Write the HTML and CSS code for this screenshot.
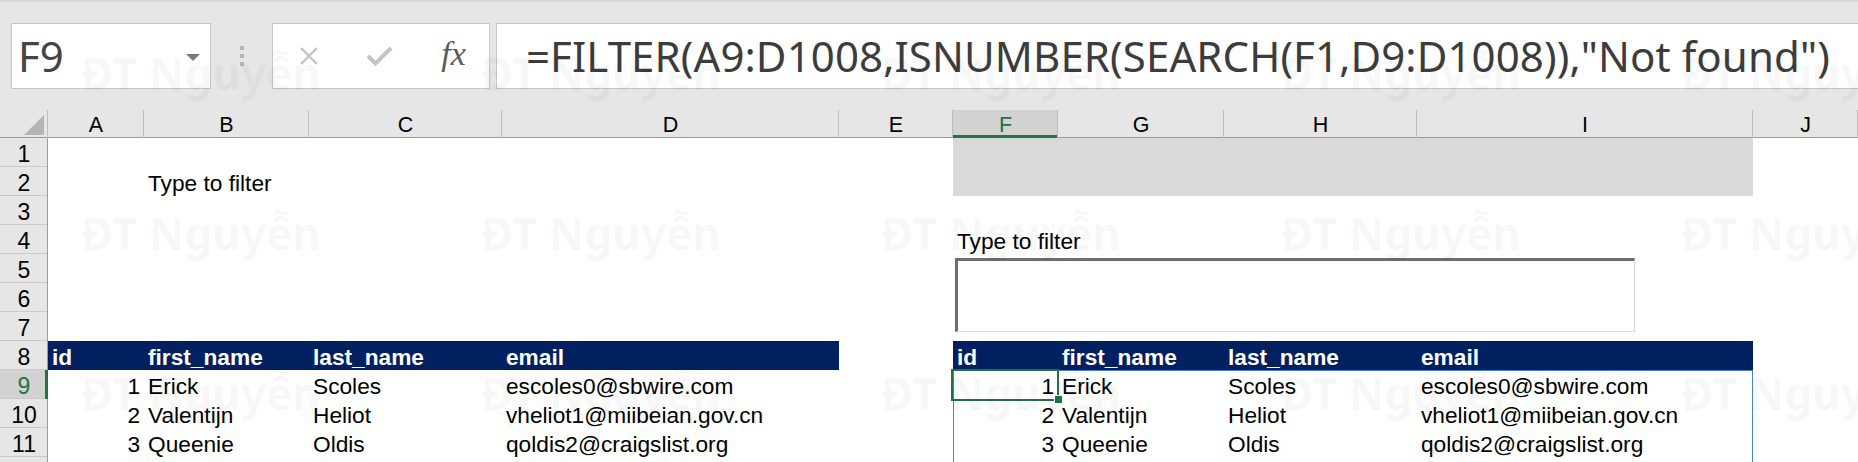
FILE: index.html
```html
<!DOCTYPE html>
<html lang="en">
<head>
    <meta charset="UTF-8">
    <meta name="viewport" content="width=device-width, initial-scale=1.0">
    <title>FILTER - Type to filter</title>
    <link rel="stylesheet" href="styles.css">
</head>
<body>
    <div class="formula-bar">
        <div class="name-box">
            <span>F9</span>
            <span class="drop"></span>
        </div>
        <div class="grip"><i></i><i></i><i></i></div>
        <div class="func-box">
            <span class="slot">
                <svg width="20" height="20" viewBox="0 0 20 20"><path d="M2 2 L18 18 M18 2 L2 18" stroke="#c3c3c3" stroke-width="2.4" fill="none"/></svg>
            </span>
            <span class="slot">
                <svg width="27" height="20" viewBox="0 0 27 20"><path d="M2 10 L9.5 17.5 L25 2" stroke="#c3c3c3" stroke-width="4" fill="none"/></svg>
            </span>
            <span class="slot fx">fx</span>
        </div>
        <div class="formula">=FILTER(A9:D1008,ISNUMBER(SEARCH(F1,D9:D1008)),"Not found")</div>
    </div>

    <table class="grid">
        <colgroup>
            <col style="width:48px"><col style="width:96px"><col style="width:165px"><col style="width:193px">
            <col style="width:337px"><col style="width:114px"><col style="width:105px"><col style="width:166px">
            <col style="width:193px"><col style="width:336px"><col style="width:105px">
        </colgroup>
        <tr class="col-heads">
            <th class="corner"><span class="tri"></span></th>
            <th>A</th><th>B</th><th>C</th><th>D</th><th>E</th>
            <th class="sel">F</th><th>G</th><th>H</th><th>I</th><th>J</th>
        </tr>
        <tr>
            <th class="rh">1</th>
            <td></td><td></td><td></td><td></td><td></td>
            <td class="fill"></td><td class="fill"></td><td class="fill"></td><td class="fill"></td><td></td>
        </tr>
        <tr>
            <th class="rh">2</th>
            <td></td><td>Type to filter</td><td></td><td></td><td></td>
            <td class="fill"></td><td class="fill"></td><td class="fill"></td><td class="fill"></td><td></td>
        </tr>
        <tr>
            <th class="rh">3</th>
            <td></td><td></td><td></td><td></td><td></td><td></td><td></td><td></td><td></td><td></td>
        </tr>
        <tr>
            <th class="rh">4</th>
            <td></td><td></td><td></td><td></td><td></td>
            <td>Type to filter</td><td></td><td></td><td></td><td></td>
        </tr>
        <tr>
            <th class="rh">5</th>
            <td></td><td></td><td></td><td></td><td></td><td></td><td></td><td></td><td></td><td></td>
        </tr>
        <tr>
            <th class="rh">6</th>
            <td></td><td></td><td></td><td></td><td></td><td></td><td></td><td></td><td></td><td></td>
        </tr>
        <tr>
            <th class="rh">7</th>
            <td></td><td></td><td></td><td></td><td></td><td></td><td></td><td></td><td></td><td></td>
        </tr>
        <tr>
            <th class="rh">8</th>
            <td class="hd">id</td><td class="hd">first_name</td><td class="hd">last_name</td><td class="hd">email</td>
            <td></td>
            <td class="hd">id</td><td class="hd">first_name</td><td class="hd">last_name</td><td class="hd">email</td>
            <td></td>
        </tr>
        <tr>
            <th class="rh active-row">9</th>
            <td class="num">1</td><td>Erick</td><td>Scoles</td><td>escoles0@sbwire.com</td>
            <td></td>
            <td class="num sp-l sp-t active">1</td><td class="sp-t">Erick</td><td class="sp-t">Scoles</td><td class="sp-t sp-r">escoles0@sbwire.com</td>
            <td></td>
        </tr>
        <tr>
            <th class="rh">10</th>
            <td class="num">2</td><td>Valentijn</td><td>Heliot</td><td>vheliot1@miibeian.gov.cn</td>
            <td></td>
            <td class="num sp-l">2</td><td>Valentijn</td><td>Heliot</td><td class="sp-r">vheliot1@miibeian.gov.cn</td>
            <td></td>
        </tr>
        <tr>
            <th class="rh">11</th>
            <td class="num">3</td><td>Queenie</td><td>Oldis</td><td>qoldis2@craigslist.org</td>
            <td></td>
            <td class="num sp-l">3</td><td>Queenie</td><td>Oldis</td><td class="sp-r">qoldis2@craigslist.org</td>
            <td></td>
        </tr>
        <tr>
            <th class="rh">12</th>
            <td></td><td></td><td></td><td></td><td></td>
            <td class="sp-l"></td><td></td><td></td><td class="sp-r"></td><td></td>
        </tr>
    </table>

    <!-- textbox control floating over F5:I7 -->
    <div class="textbox"></div>

    <div class="watermark">
        <div class="wm-row"><span>ĐT Nguyễn</span><span>ĐT Nguyễn</span><span>ĐT Nguyễn</span><span>ĐT Nguyễn</span><span>ĐT Nguyễn</span></div>
        <div class="wm-row"><span>ĐT Nguyễn</span><span>ĐT Nguyễn</span><span>ĐT Nguyễn</span><span>ĐT Nguyễn</span><span>ĐT Nguyễn</span></div>
        <div class="wm-row"><span>ĐT Nguyễn</span><span>ĐT Nguyễn</span><span>ĐT Nguyễn</span><span>ĐT Nguyễn</span><span>ĐT Nguyễn</span></div>
    </div>
</body>
</html>
```

FILE: styles.css
```css
body {
    margin: 0;
    width: 1858px;
    height: 462px;
    overflow: hidden;
    position: relative;
    background: #fff;
    font-family: "Liberation Sans", Arial, sans-serif;
}

/* formula bar */
.formula-bar {
    display: flex;
    align-items: center;
    height: 108px;
    border-top: 2px solid #d6d6d6;
    background: #e6e6e6;
    padding-left: 11px;
}

.name-box {
    width: 200px;
    height: 66px;
    box-sizing: border-box;
    border: 1px solid #c6c6c6;
    background: #fff;
    display: flex;
    align-items: center;
    justify-content: space-between;
    padding: 0 10px 0 6px;
    font-family: "Noto Sans", sans-serif;
    font-size: 42px;
    line-height: 64px;
    color: #444;
}

.drop {
    width: 0;
    height: 0;
    border-left: 7px solid transparent;
    border-right: 7px solid transparent;
    border-top: 7px solid #7a7a7a;
    margin-top: 2px;
}

.grip {
    display: flex;
    flex-direction: column;
    gap: 4px;
    margin: 0 28px 0 29px;
}

.grip i {
    width: 4px;
    height: 4px;
    background: #b3b3b3;
}

.func-box {
    width: 218px;
    height: 66px;
    box-sizing: border-box;
    border: 1px solid #c6c6c6;
    background: #fff;
    display: flex;
    align-items: center;
}

.slot {
    width: 71px;
    display: flex;
    justify-content: center;
    align-items: center;
}

.fx {
    font-family: "Liberation Serif", serif;
    font-style: italic;
    font-size: 34px;
    color: #5a5a5a;
    margin-top: -4px;
    padding-left: 3px;
}

.formula {
    flex: 1;
    height: 66px;
    box-sizing: border-box;
    margin-left: 6px;
    border: 1px solid #c6c6c6;
    border-right: none;
    background: #fff;
    padding-left: 29px;
    font-family: "Noto Sans", sans-serif;
    font-size: 42px;
    letter-spacing: 0.1px;
    line-height: 64px;
    color: #3c3c3c;
    white-space: nowrap;
}

/* sheet */
.grid {
    width: 1858px;
    table-layout: fixed;
    border-collapse: separate;
    border-spacing: 0;
    font-size: 22.7px;
    color: #000;
}

.grid tr {
    height: 29px;
}

.grid td {
    padding: 0 4px 1px;
    vertical-align: bottom;
    line-height: 24px;
    white-space: nowrap;
    overflow: visible;
}

.col-heads {
    height: 28px !important;
}

.col-heads th {
    background: #e6e6e6;
    font-weight: normal;
    font-size: 21.5px;
    line-height: 22px;
    padding: 0 0 2px;
    vertical-align: bottom;
    box-shadow: inset -1px 0 #bdbdbd, inset 0 -1px #9b9b9b;
}

.col-heads th.sel {
    background: #d2d2d2;
    color: #217346;
    box-shadow: inset -1px 0 #bdbdbd, inset 0 -3px #217346;
}

.corner {
    text-align: right;
    padding: 0 4px 3px 0 !important;
}

.tri {
    display: inline-block;
    width: 0;
    height: 0;
    border-left: 20px solid transparent;
    border-bottom: 20px solid #b4b4b4;
    vertical-align: bottom;
}

.rh {
    background: #e6e6e6;
    font-weight: normal;
    font-size: 23px;
    line-height: 24px;
    padding: 0 0 1px;
    vertical-align: bottom;
    box-shadow: inset -1px 0 #9b9b9b, inset 0 -1px #cacaca;
}

.rh.active-row {
    background: #d2d2d2;
    color: #217346;
    box-shadow: inset -3px 0 #217346, inset 0 -1px #cacaca;
}

.grid td.fill {
    background: #d9d9d9;
}

.grid td.hd {
    background: #002060;
    color: #fff;
    font-weight: bold;
}

.grid td.num {
    text-align: right;
}

.sp-l { box-shadow: inset 1px 0 #4a7fd0; }
.sp-r { box-shadow: inset -1px 0 #4a7fd0; }
.sp-t { box-shadow: inset 0 1px #4a7fd0; }
.sp-t.sp-r { box-shadow: inset 0 1px #4a7fd0, inset -1px 0 #4a7fd0; }
.sp-l.sp-t { box-shadow: inset 0 1px #4a7fd0, inset 1px 0 #4a7fd0; }

.grid td.active {
    position: relative;
}

.grid td.active::before {
    content: "";
    position: absolute;
    left: -2px;
    top: -1px;
    right: -1px;
    bottom: -2px;
    border: 2px solid #217346;
}

.grid td.active::after {
    content: "";
    position: absolute;
    right: -4px;
    bottom: -4px;
    width: 7px;
    height: 7px;
    background: #217346;
    box-shadow: -1px -1px 0 #fff;
}

/* form control over the sheet */
.textbox {
    position: absolute;
    left: 955px;
    top: 258px;
    width: 680px;
    height: 74px;
    box-sizing: border-box;
    background: #fff;
    border-style: solid;
    border-width: 3px 1px 1px 3px;
    border-color: #6e6e6e #d4d4d4 #dcdcdc #6e6e6e;
}

/* watermark */
.watermark {
    position: absolute;
    inset: 0;
    pointer-events: none;
    display: flex;
    flex-direction: column;
    gap: 116px;
    padding-top: 51px;
}

.wm-row {
    display: flex;
    padding-left: 81px;
}

.wm-row span {
    flex: none;
    width: 400px;
    font-family: "Noto Sans", sans-serif;
    font-weight: bold;
    font-size: 44px;
    line-height: 44px;
    color: rgba(0, 0, 0, 0.045);
    white-space: nowrap;
}
```
